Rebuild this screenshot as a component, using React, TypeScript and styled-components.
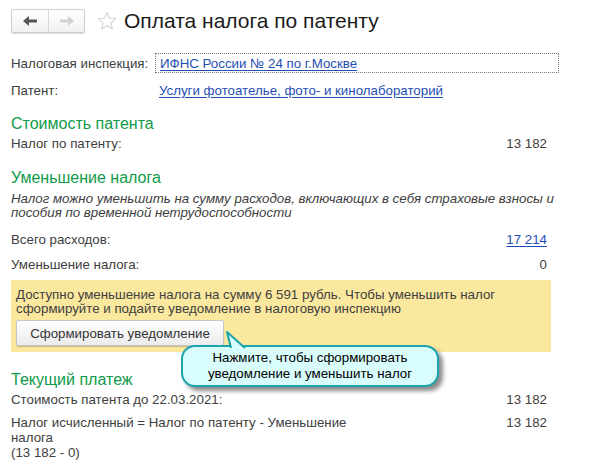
import styled, { createGlobalStyle } from "styled-components";

const GlobalStyle = createGlobalStyle`
  html, body {
    margin: 0;
    padding: 0;
    background: #fff;
  }
  body {
    font-family: "Liberation Sans", Arial, sans-serif;
    font-size: 13.3px;
    color: #404040;
  }
`;

const Page = styled.div`
  position: relative;
  width: 592px;
  height: 465px;
  overflow: hidden;
  padding: 0 41px 0 11px;
  box-sizing: border-box;
`;

const Header = styled.div`
  display: flex;
  align-items: center;
  height: 24px;
  padding-top: 9px;
  margin-bottom: 20px;
`;

const NavGroup = styled.div`
  display: flex;
  height: 24px;
  border: 1px solid #cfcfcf;
  border-radius: 2px;
  box-sizing: border-box;
  box-shadow: 0 1px 1px rgba(0, 0, 0, 0.15);
  background: linear-gradient(#ffffff, #f1f1f1);
`;

const NavButton = styled.div<{ $first?: boolean }>`
  width: ${(p) => (p.$first ? "36px" : "35px")};
  display: flex;
  align-items: center;
  justify-content: center;
  border-right: ${(p) => (p.$first ? "1px solid #d6d6d6" : "none")};
`;

const Star = styled.div`
  margin-left: 12px;
  width: 20px;
  height: 20px;
  display: flex;
`;

const Title = styled.h1`
  margin: 0 0 0 7px;
  font-size: 21px;
  font-weight: normal;
  color: #1a1a1a;
`;

const FieldRow = styled.div<{ $h?: number; $top?: number }>`
  display: flex;
  align-items: center;
  height: ${(p) => p.$h ?? 20}px;
  margin-top: ${(p) => p.$top ?? 0}px;
  line-height: 15px;
`;

const Label = styled.div`
  width: 144px;
  flex-shrink: 0;
`;

const FocusBox = styled.div`
  flex: 1;
  margin-right: -8px;
  height: 18px;
  border: 1px dotted #777;
  padding: 0 4px;
  display: flex;
  align-items: center;
`;

const Link = styled.a`
  color: #1f4fb3;
  text-decoration: underline;
  text-underline-offset: 2px;
  cursor: pointer;
`;

const PlainLink = styled.div`
  padding-left: 4px;
`;

const Section = styled.h2<{ $top: number }>`
  margin: ${(p) => p.$top}px 0 0;
  font-size: 16px;
  font-weight: normal;
  color: #109a4a;
  height: 20px;
  line-height: 20px;
`;

const ValueRow = styled.div<{ $top?: number }>`
  display: flex;
  justify-content: space-between;
  align-items: flex-start;
  margin-top: ${(p) => p.$top ?? 0}px;
  line-height: 15px;
  padding-top: 2px;
  min-height: 18px;
  box-sizing: border-box;
`;

const Value = styled.div`
  padding-right: 4px;
  text-align: right;
`;

const Note = styled.div`
  font-style: italic;
  line-height: 14px;
  margin-top: 4px;
  white-space: nowrap;
`;

const Notice = styled.div`
  margin-top: 7px;
  background: #fbe89f;
  padding: 8px 5px 6px;
  line-height: 14px;
  white-space: nowrap;
`;

const Button = styled.button`
  display: block;
  margin-top: 4px;
  height: 26px;
  width: 208px;
  border: 1px solid #c5c5c5;
  border-radius: 2px;
  background: linear-gradient(#ffffff, #ececec);
  box-shadow: 0 1px 1px rgba(0, 0, 0, 0.2);
  font-family: "Liberation Sans", Arial, sans-serif;
  font-size: 13.3px;
  color: #333;
  padding: 0;
`;

const FormulaLabel = styled.div`
  width: 360px;
  line-height: 15px;
`;

const Callout = styled.div`
  position: absolute;
  left: 181px;
  top: 345px;
  width: 258px;
  height: 42px;
  box-sizing: border-box;
  border: 2px solid #1ba4ae;
  border-radius: 14px;
  background: #d9fcfc;
  box-shadow: 4px 4px 4px rgba(0, 0, 0, 0.45);
  color: #000;
  text-align: center;
  line-height: 16px;
  padding-top: 3px;
  font-size: 13.3px;
`;

const Tail = styled.svg`
  position: absolute;
  left: 42px;
  top: -15px;
  overflow: visible;
`;

export default function App() {
  return (
    <>
      <GlobalStyle />
      <Page>
        <Header>
          <NavGroup>
            <NavButton $first>
              <svg width="14" height="10" viewBox="0 0 14 10">
                <path d="M0 5 L6 0 L6 3.5 L14 3.5 L14 6.5 L6 6.5 L6 10 Z" fill="#555" />
              </svg>
            </NavButton>
            <NavButton>
              <svg width="14" height="10" viewBox="0 0 14 10">
                <path d="M14 5 L8 0 L8 3.5 L0 3.5 L0 6.5 L8 6.5 L8 10 Z" fill="#d2d2d2" />
              </svg>
            </NavButton>
          </NavGroup>
          <Star>
            <svg width="20" height="20" viewBox="0 0 20 20">
              <path
                d="M10 1.5 L12.5 7.3 L18.6 7.8 L14 11.9 L15.4 18 L10 14.8 L4.6 18 L6 11.9 L1.4 7.8 L7.5 7.3 Z"
                fill="none"
                stroke="#d4d4d4"
                strokeWidth="1.1"
                strokeLinejoin="round"
              />
            </svg>
          </Star>
          <Title>Оплата налога по патенту</Title>
        </Header>

        <FieldRow>
          <Label>Налоговая инспекция:</Label>
          <FocusBox>
            <Link>ИФНС России № 24 по г.Москве</Link>
          </FocusBox>
        </FieldRow>
        <FieldRow $h={26} $top={4}>
          <Label>Патент:</Label>
          <PlainLink>
            <Link>Услуги фотоателье, фото- и кинолабораторий</Link>
          </PlainLink>
        </FieldRow>

        <Section $top={11}>Стоимость патента</Section>
        <ValueRow>
          <span>Налог по патенту:</span>
          <Value>13 182</Value>
        </ValueRow>

        <Section $top={16}>Уменьшение налога</Section>
        <Note>
          Налог можно уменьшить на сумму расходов, включающих в себя страховые взносы и
          <br />
          пособия по временной нетрудоспособности
        </Note>
        <ValueRow $top={10}>
          <span>Всего расходов:</span>
          <Value>
            <Link>17 214</Link>
          </Value>
        </ValueRow>
        <ValueRow $top={7}>
          <span>Уменьшение налога:</span>
          <Value>0</Value>
        </ValueRow>

        <Notice>
          Доступно уменьшение налога на сумму 6 591 рубль. Чтобы уменьшить налог
          <br />
          сформируйте и подайте уведомление в налоговую инспекцию
          <Button>Сформировать уведомление</Button>
        </Notice>

        <Section $top={18}>Текущий платеж</Section>
        <ValueRow>
          <span>Стоимость патента до 22.03.2021:</span>
          <Value>13 182</Value>
        </ValueRow>
        <ValueRow $top={5}>
          <FormulaLabel>
            Налог исчисленный = Налог по патенту - Уменьшение
            <br />
            налога
            <br />
            (13 182 - 0)
          </FormulaLabel>
          <Value>13 182</Value>
        </ValueRow>

        <Callout>
          <Tail width="30" height="18" viewBox="0 0 30 18">
            <path d="M6 18 L2 0 L22 18 Z" fill="#d9fcfc" />
            <path d="M6 16 L2 0 L20 16" fill="none" stroke="#1ba4ae" strokeWidth="2" strokeLinejoin="round" />
          </Tail>
          Нажмите, чтобы сформировать
          <br />
          уведомление и уменьшить налог
        </Callout>
      </Page>
    </>
  );
}
